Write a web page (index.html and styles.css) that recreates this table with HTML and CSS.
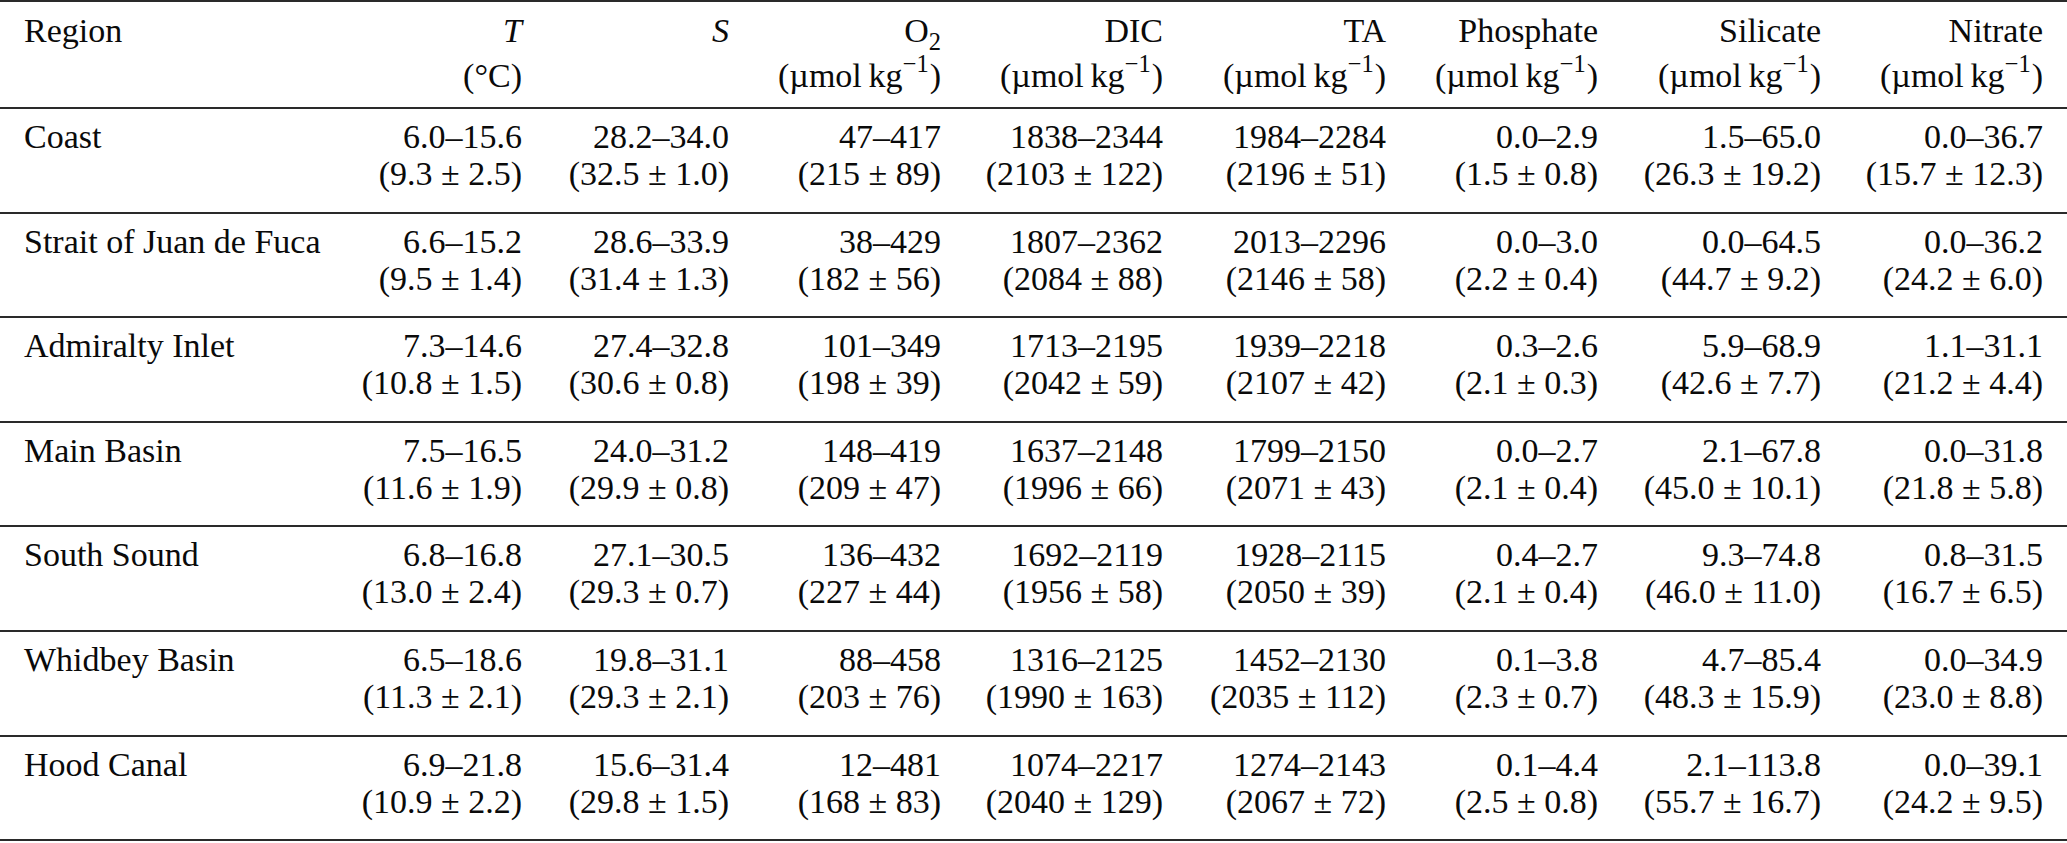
FILE: index.html
```html
<!DOCTYPE html>
<html lang="en">
<head>
<meta charset="utf-8">
<title>Regional ranges</title>
<link rel="stylesheet" href="styles.css">
</head>
<body>
<table class="data">
  <colgroup>
    <col class="c-region"><col class="c-t"><col class="c-s"><col class="c-o2"><col class="c-dic"><col class="c-ta"><col class="c-p"><col class="c-si"><col class="c-n">
  </colgroup>
  <thead>
    <tr>
      <th class="lbl"><div class="l1">Region</div></th>
      <th><div class="l1"><i>T</i></div><div class="l2">(°C)</div></th>
      <th><div class="l1"><i>S</i></div><div class="l2">&nbsp;</div></th>
      <th><div class="l1">O<sub class="sb">2</sub></div><div class="l2">(µmol&#8201;kg<sup class="sp">−1</sup>)</div></th>
      <th><div class="l1">DIC</div><div class="l2">(µmol&#8201;kg<sup class="sp">−1</sup>)</div></th>
      <th><div class="l1">TA</div><div class="l2">(µmol&#8201;kg<sup class="sp">−1</sup>)</div></th>
      <th><div class="l1">Phosphate</div><div class="l2">(µmol&#8201;kg<sup class="sp">−1</sup>)</div></th>
      <th><div class="l1">Silicate</div><div class="l2">(µmol&#8201;kg<sup class="sp">−1</sup>)</div></th>
      <th class="last"><div class="l1">Nitrate</div><div class="l2">(µmol&#8201;kg<sup class="sp">−1</sup>)</div></th>
    </tr>
  </thead>
  <tbody>
    <tr>
      <td class="lbl">Coast</td>
      <td>6.0–15.6<br>(9.3<span class="pm">±</span>2.5)</td>
      <td>28.2–34.0<br>(32.5<span class="pm">±</span>1.0)</td>
      <td>47–417<br>(215<span class="pm">±</span>89)</td>
      <td>1838–2344<br>(2103<span class="pm">±</span>122)</td>
      <td>1984–2284<br>(2196<span class="pm">±</span>51)</td>
      <td>0.0–2.9<br>(1.5<span class="pm">±</span>0.8)</td>
      <td>1.5–65.0<br>(26.3<span class="pm">±</span>19.2)</td>
      <td class="last">0.0–36.7<br>(15.7<span class="pm">±</span>12.3)</td>
    </tr>
    <tr>
      <td class="lbl">Strait of Juan de Fuca</td>
      <td>6.6–15.2<br>(9.5<span class="pm">±</span>1.4)</td>
      <td>28.6–33.9<br>(31.4<span class="pm">±</span>1.3)</td>
      <td>38–429<br>(182<span class="pm">±</span>56)</td>
      <td>1807–2362<br>(2084<span class="pm">±</span>88)</td>
      <td>2013–2296<br>(2146<span class="pm">±</span>58)</td>
      <td>0.0–3.0<br>(2.2<span class="pm">±</span>0.4)</td>
      <td>0.0–64.5<br>(44.7<span class="pm">±</span>9.2)</td>
      <td class="last">0.0–36.2<br>(24.2<span class="pm">±</span>6.0)</td>
    </tr>
    <tr>
      <td class="lbl">Admiralty Inlet</td>
      <td>7.3–14.6<br>(10.8<span class="pm">±</span>1.5)</td>
      <td>27.4–32.8<br>(30.6<span class="pm">±</span>0.8)</td>
      <td>101–349<br>(198<span class="pm">±</span>39)</td>
      <td>1713–2195<br>(2042<span class="pm">±</span>59)</td>
      <td>1939–2218<br>(2107<span class="pm">±</span>42)</td>
      <td>0.3–2.6<br>(2.1<span class="pm">±</span>0.3)</td>
      <td>5.9–68.9<br>(42.6<span class="pm">±</span>7.7)</td>
      <td class="last">1.1–31.1<br>(21.2<span class="pm">±</span>4.4)</td>
    </tr>
    <tr>
      <td class="lbl">Main Basin</td>
      <td>7.5–16.5<br>(11.6<span class="pm">±</span>1.9)</td>
      <td>24.0–31.2<br>(29.9<span class="pm">±</span>0.8)</td>
      <td>148–419<br>(209<span class="pm">±</span>47)</td>
      <td>1637–2148<br>(1996<span class="pm">±</span>66)</td>
      <td>1799–2150<br>(2071<span class="pm">±</span>43)</td>
      <td>0.0–2.7<br>(2.1<span class="pm">±</span>0.4)</td>
      <td>2.1–67.8<br>(45.0<span class="pm">±</span>10.1)</td>
      <td class="last">0.0–31.8<br>(21.8<span class="pm">±</span>5.8)</td>
    </tr>
    <tr>
      <td class="lbl">South Sound</td>
      <td>6.8–16.8<br>(13.0<span class="pm">±</span>2.4)</td>
      <td>27.1–30.5<br>(29.3<span class="pm">±</span>0.7)</td>
      <td>136–432<br>(227<span class="pm">±</span>44)</td>
      <td>1692–2119<br>(1956<span class="pm">±</span>58)</td>
      <td>1928–2115<br>(2050<span class="pm">±</span>39)</td>
      <td>0.4–2.7<br>(2.1<span class="pm">±</span>0.4)</td>
      <td>9.3–74.8<br>(46.0<span class="pm">±</span>11.0)</td>
      <td class="last">0.8–31.5<br>(16.7<span class="pm">±</span>6.5)</td>
    </tr>
    <tr>
      <td class="lbl">Whidbey Basin</td>
      <td>6.5–18.6<br>(11.3<span class="pm">±</span>2.1)</td>
      <td>19.8–31.1<br>(29.3<span class="pm">±</span>2.1)</td>
      <td>88–458<br>(203<span class="pm">±</span>76)</td>
      <td>1316–2125<br>(1990<span class="pm">±</span>163)</td>
      <td>1452–2130<br>(2035<span class="pm">±</span>112)</td>
      <td>0.1–3.8<br>(2.3<span class="pm">±</span>0.7)</td>
      <td>4.7–85.4<br>(48.3<span class="pm">±</span>15.9)</td>
      <td class="last">0.0–34.9<br>(23.0<span class="pm">±</span>8.8)</td>
    </tr>
    <tr>
      <td class="lbl">Hood Canal</td>
      <td>6.9–21.8<br>(10.9<span class="pm">±</span>2.2)</td>
      <td>15.6–31.4<br>(29.8<span class="pm">±</span>1.5)</td>
      <td>12–481<br>(168<span class="pm">±</span>83)</td>
      <td>1074–2217<br>(2040<span class="pm">±</span>129)</td>
      <td>1274–2143<br>(2067<span class="pm">±</span>72)</td>
      <td>0.1–4.4<br>(2.5<span class="pm">±</span>0.8)</td>
      <td>2.1–113.8<br>(55.7<span class="pm">±</span>16.7)</td>
      <td class="last">0.0–39.1<br>(24.2<span class="pm">±</span>9.5)</td>
    </tr>
  </tbody>
</table>
</body>
</html>
```
FILE: styles.css
```css
html, body {
  margin: 0;
  padding: 0;
  background: #ffffff;
}
body {
  font-family: "Liberation Serif", "Times New Roman", serif;
  font-size: 34px;
  color: #0a0a0a;
}
.data {
  width: 2067px;
  table-layout: fixed;
  border-collapse: separate;
  border-spacing: 0;
  border-top: 2px solid #2a2a2a;
}
.c-region { width: 330px; }
.c-t { width: 192px; }
.c-s { width: 207px; }
.c-o2 { width: 212px; }
.c-dic { width: 222px; }
.c-ta { width: 223px; }
.c-p { width: 212px; }
.c-si { width: 223px; }
.c-n { width: 246px; }

.data th,
.data td {
  text-align: right;
  font-weight: normal;
  vertical-align: top;
  padding: 0;
  line-height: 37px;
  white-space: nowrap;
  border-bottom: 2px solid #2a2a2a;
}
.data th {
  padding-top: 9.6px;
  padding-bottom: 13.4px;
}
.data td {
  padding-top: 9px;
  padding-bottom: 19.6px;
}
.data .lbl {
  text-align: left;
  padding-left: 24px;
}
.data .last {
  padding-right: 24px;
}
.l1 { height: 37px; }
.l2 { height: 37px; margin-top: 8px; }

.sb {
  font-size: 0.72em;
  line-height: 0;
  vertical-align: -0.34em;
}
.sp {
  font-size: 0.72em;
  line-height: 0;
  vertical-align: 0.6em;
  padding-right: 1px;
}
.pm {
  padding: 0 0.25em;
}
```
